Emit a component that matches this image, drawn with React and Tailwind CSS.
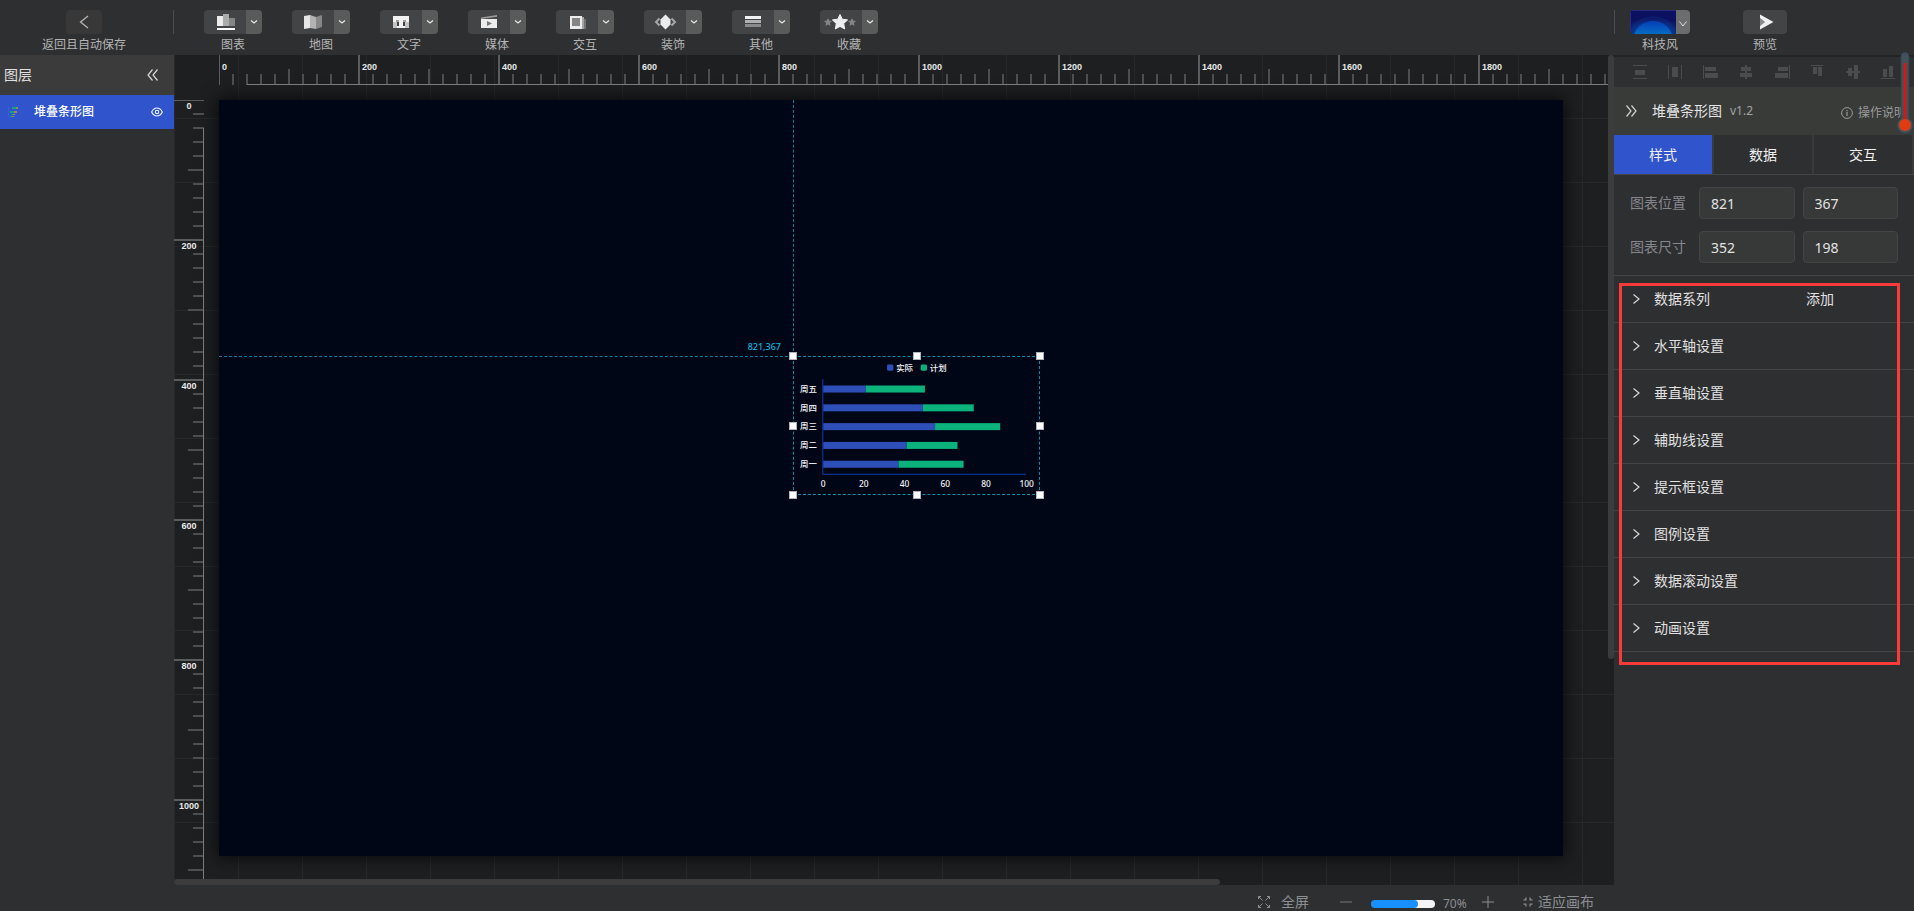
import React, { useState } from "react";

const SCALE = 0.7;

const TOOLS = [
  {
    label: "图表",
    icon: (
      <>
        <path d="M13 6h6v10h-6z" fill="#ececec" />
        <path d="M19 4h6v12h-6z" fill="#ababab" />
        <path d="M25 8h6v8h-6z" fill="#858585" />
        <path d="M13 18h18v2H13z" fill="#fff" />
      </>
    ),
  },
  {
    label: "地图",
    icon: (
      <>
        <path d="M12 6l6-1v13l-6 1z" fill="#e6e6e6" />
        <path d="M18 5l6 2v12l-6-1z" fill="#b2b2b2" />
        <path d="M24 7l6-2v12l-6 2z" fill="#878787" />
      </>
    ),
  },
  {
    label: "文字",
    icon: (
      <>
        <path d="M13 6h16v6H13z" fill="#f2f2f2" />
        <path d="M13 12h4v6h-4zM25 12h4v6h-4z" fill="#c4c4c4" />
        <path d="M16 10h3v2h-3zM23 10h3v2h-3z" fill="#a0a0a0" />
        <path d="M19 11h4v5h2v2h-8v-2h2z" fill="#f2f2f2" />
      </>
    ),
  },
  {
    label: "媒体",
    icon: (
      <>
        <path d="M13 9h16v9H13z" fill="#ececec" />
        <path d="M13 7.500L29 5v1.800L13 9z" fill="#9a9a9a" />
        <path d="M19 11l5 2.500-5 2.500z" fill="#777" />
      </>
    ),
  },
  {
    label: "交互",
    icon: (
      <>
        <path d="M26 9h4v10h-4z" fill="#727374" />
        <path d="M24 7h4v12h-4z" fill="#a3a3a3" />
        <path d="M14 6h12v13H14z" fill="#ececec" />
        <path d="M16 8h8v8h-8z" fill="#858585" />
      </>
    ),
  },
  {
    label: "装饰",
    icon: (
      <>
        <path d="M15.500 8.500L12 12l3.500 3.500M27.500 8.500L31 12l-3.500 3.500" fill="none" stroke="#a6a6a6" strokeWidth="2" />
        <path d="M21.500 4.500L24 7l2.500 2.500v5L24 17l-2.500 2.500L19 17l-2.500-2.500v-5L19 7z" fill="#ececec" />
      </>
    ),
  },
  {
    label: "其他",
    icon: (
      <>
        <path d="M13 6h16v3H13z" fill="#f2f2f2" />
        <path d="M13 10h16v3H13z" fill="#b0b0b0" />
        <path d="M13 14h16v3H13z" fill="#8a8a8a" />
      </>
    ),
  },
  {
    label: "收藏",
    icon: (
      <>
        <path d="M8 8l1.200 2.600 2.800.3-2.100 2 .6 2.900L8 14.400l-2.500 1.400.6-2.900-2.100-2 2.800-.3z" fill="#858585" />
        <path d="M32 8l1.200 2.600 2.800.3-2.100 2 .6 2.900-2.500-1.400-2.500 1.400.6-2.900-2.100-2 2.800-.3z" fill="#858585" />
        <path d="M20 4.500l2.300 4.700 5.300.7-3.900 3.600 1 5.500-4.700-2.600L15.300 19l1-5.500-3.900-3.600 5.300-.7z" fill="#efefef" stroke="#efefef" strokeLinejoin="round" />
      </>
    ),
  },
];

const ALIGN = [
  ["水平分布", "M1 1h14v1H1zM3 6h10v5H3zM1 14h14v1H1z"],
  ["垂直分布", "M1 1h1v14H1zM5 3h6v10H5zM14 1h1v14h-1z"],
  ["左对齐", "M0 1h1v14H0zM2 3h11v4H2zM2 9h13v5H2z"],
  ["水平居中", "M7 1h2v14H7zM3 3h10v4H3zM2 9h12v4H2z"],
  ["右对齐", "M15 1h1v14h-1zM4 3h10v4H4zM1 9h13v5H1z"],
  ["顶对齐", "M2 1h12v1H2zM4 3h4v7H4zM9 3h4v9H9z"],
  ["垂直居中", "M1 7h14v2H1zM3 4h4v8H3zM9 1h4v14H9z"],
  ["底对齐", "M1 14h14v1H1zM3 5h4v8H3zM9 2h4v11H9z"],
];

const SECTIONS = ["数据系列", "水平轴设置", "垂直轴设置", "辅助线设置", "提示框设置", "图例设置", "数据滚动设置", "动画设置"];

const ROWS = [
  ["周五", 21, 50],
  ["周四", 49, 74],
  ["周三", 55, 87],
  ["周二", 41, 66],
  ["周一", 37, 69],
];

function Chevron({ className }) {
  return (
    <svg viewBox="0 0 8 4" className={className} aria-hidden="true">
      <path d="M1 .5l3 2.500L7 .5" fill="none" stroke="#e4e4e4" strokeWidth="1.300" />
    </svg>
  );
}

function Tool({ label, icon }) {
  return (
    <div className="flex flex-col items-center">
      <div className="flex h-6 overflow-hidden rounded-sm">
        <button type="button" aria-label={label} className="w-[42px] bg-[#434446]">
          <svg viewBox="0 0 42 24" className="block h-6 w-[42px]" aria-hidden="true">{icon}</svg>
        </button>
        <button type="button" aria-label={`${label}菜单`} className="flex w-4 items-center justify-center bg-[#595b5a]">
          <Chevron className="h-1 w-2" />
        </button>
      </div>
      <span className="mt-0.5 text-xs leading-[18px] text-[#b4b4b4]">{label}</span>
    </div>
  );
}

function Header() {
  return (
    <header className="flex h-[55px] shrink-0 bg-[#2e2f31] pt-2.5">
      <div className="flex w-[174px] shrink-0 justify-between">
        <div className="flex w-[168px] flex-col items-center">
          <button type="button" aria-label="返回" className="flex h-6 w-9 items-center justify-center rounded-sm bg-[#373837]">
            <svg viewBox="0 0 10 14" className="h-3.5 w-2.5" aria-hidden="true">
              <path d="M9 1L1.500 7 9 13" fill="none" stroke="#b5b5b5" strokeWidth="1.300" />
            </svg>
          </button>
          <span className="mt-0.5 text-xs leading-[18px] text-[#b4b4b4]">返回且自动保存</span>
        </div>
        <div className="h-6 w-px bg-[#4a4b4c]" />
      </div>
      <nav className="flex gap-[30px] pl-[30px]">
        {TOOLS.map((t) => (
          <Tool key={t.label} {...t} />
        ))}
      </nav>
      <div className="ml-auto flex w-[300px] shrink-0">
        <div className="h-6 w-px bg-[#4a4b4c]" />
        <div className="ml-[15px] flex flex-col items-center">
          <div className="flex h-6 overflow-hidden rounded-sm">
            <button type="button" aria-label="科技风" className="w-[46px]">
              <svg viewBox="0 0 46 24" className="block h-6 w-[46px]" aria-hidden="true">
                <defs>
                  <radialGradient id="glow" cx="0.5" cy="1" r="0.700">
                    <stop offset="0" stopColor="#0a6fd0" />
                    <stop offset="1" stopColor="#0c1060" />
                  </radialGradient>
                  <linearGradient id="dome" x1="0" y1="0" x2="0" y2="0.500">
                    <stop offset="0" stopColor="#063db8" />
                    <stop offset="1" stopColor="#0585c8" />
                  </linearGradient>
                </defs>
                <path d="M0 0h46v24H0z" fill="url(#glow)" />
                <circle cx="23" cy="31" r="24" fill="none" stroke="#0d3a8c" strokeOpacity="0.500" />
                <circle cx="23" cy="31" r="20" fill="url(#dome)" />
                <path d="M.5 24V.5H46" fill="none" stroke="#2c2b7c" />
              </svg>
            </button>
            <button type="button" aria-label="主题菜单" className="flex w-3.5 items-center justify-center bg-[#6c6e6e] pt-1">
              <svg viewBox="0 0 8 6" className="h-1.5 w-2" aria-hidden="true">
                <path d="M.5.5L4 5 7.500.5" fill="none" stroke="#ddd" />
              </svg>
            </button>
          </div>
          <span className="mt-0.5 text-xs leading-[18px] text-[#b4b4b4]">科技风</span>
        </div>
        <div className="ml-[53px] flex flex-col items-center">
          <button type="button" aria-label="预览" className="h-6 w-11 rounded-sm bg-[#434446]">
            <svg viewBox="0 0 44 24" className="block h-6 w-11" aria-hidden="true">
              <path d="M17 8l5 4-5 4z" fill="#8a8a8a" />
              <path d="M17 4.500L30.500 12 17 19.500V16l5-4-5-4z" fill="#f0f0f0" />
            </svg>
          </button>
          <span className="mt-0.5 text-xs leading-[18px] text-[#b4b4b4]">预览</span>
        </div>
      </div>
    </header>
  );
}

function Layers() {
  return (
    <aside className="flex w-[174px] shrink-0 flex-col bg-[#2e2f31]">
      <div className="flex h-10 items-center justify-between bg-[#3a3b3a] pl-1 pr-4">
        <h2 className="text-sm text-[#e0e0e0]">图层</h2>
        <button type="button" aria-label="收起图层">
          <svg viewBox="0 0 11 12" className="h-3 w-[11px]" aria-hidden="true">
            <path d="M5.500.5L1 6l4.500 5.500M10.500.5L6 6l4.500 5.500" fill="none" stroke="#d8d8d8" strokeWidth="1.200" />
          </svg>
        </button>
      </div>
      <div className="flex h-[34px] items-center bg-[#2f54cb] pl-2 pr-[11px]">
        <svg viewBox="0 0 12 12" className="h-3 w-3" aria-hidden="true">
          <path d="M0 1v10" stroke="#4668cf" />
          <path d="M4 1h4v2H4zM2 5h4v2H2zM3 8h2v1H3zM2 10h2v1H2z" fill="#16a08a" />
          <path d="M8 1h2v2H8zM6 5h3v2H6zM5 8h2v1H5zM4 10h2v1H4z" fill="#a08a50" />
        </svg>
        <span className="ml-3.5 text-xs font-medium text-white">堆叠条形图</span>
        <button type="button" aria-label="显示图层" className="ml-auto">
          <svg viewBox="0 0 12 10" className="h-2.5 w-3" aria-hidden="true">
            <path d="M.6 5C2 2.300 3.800 1 6 1s4 1.300 5.400 4C10 7.700 8.200 9 6 9S2 7.700.6 5z" fill="none" stroke="#f2f4ff" strokeWidth="1.100" />
            <circle cx="6" cy="5" r="1.700" fill="none" stroke="#f2f4ff" strokeWidth="1.100" />
          </svg>
        </button>
      </div>
    </aside>
  );
}

function HorizontalRuler() {
  const ticks = Array.from({ length: 100 }, (_, i) => i);
  return (
    <svg className="absolute left-0 top-0 h-[30px] w-full" aria-hidden="true">
      {ticks.map((i) => {
        const x = 45 + i * 14;
        const top = i % 10 === 0 ? 0 : i % 5 === 0 ? 14 : 19;
        return <rect key={i} x={i === 0 ? x : x - 1} y={top} width={i === 0 ? 1 : 2} height={30 - top} fill={i % 10 === 0 ? "#5b5c5c" : "#4d4e4f"} />;
      })}
      <line x1="73" x2="100%" y1="29.500" y2="29.500" stroke="#7b7c7c" />
      {ticks.filter((i) => i % 10 === 0).map((i) => (
        <text key={i} x={48 + i * 14} y="15" fontSize="9" fontWeight="700" fill="#e8e8e8" fontFamily="Liberation Sans, sans-serif">
          {i * 20}
        </text>
      ))}
    </svg>
  );
}

function VerticalRuler() {
  const ticks = Array.from({ length: 60 }, (_, i) => i);
  return (
    <svg className="absolute left-0 top-0 h-[calc(100%-6px)] w-[30px]" aria-hidden="true">
      {ticks.map((i) => {
        const y = 45 + i * 14;
        const left = i % 10 === 0 ? 0 : i % 5 === 0 ? 14 : 19;
        return <rect key={i} x={left} y={i === 0 ? y : y - 1} width={30 - left} height={i === 0 ? 1 : 2} fill={i % 10 === 0 ? "#5b5c5c" : "#4d4e4f"} />;
      })}
      <line x1="29.500" x2="29.500" y1="73" y2="100%" stroke="#7b7c7c" />
      {ticks.filter((i) => i % 10 === 0).map((i) => (
        <text key={i} x="15" y={54 + i * 14} textAnchor="middle" fontSize="9" fontWeight="700" fill="#e8e8e8" fontFamily="Liberation Sans, sans-serif">
          {i * 20}
        </text>
      ))}
    </svg>
  );
}

function BarChart() {
  const x0 = 43;
  const unit = 2.9;
  return (
    <svg viewBox="0 0 352 198" className="block h-full w-full" fontFamily="Noto Sans, Noto Sans CJK SC, sans-serif" fontSize="12" fontWeight="500" fill="#f4f4f6">
      <rect x="134" y="12" width="9" height="9" rx="2" fill="#2f4fb8" />
      <text x="147" y="21">实际</text>
      <rect x="182" y="12" width="9" height="9" rx="2" fill="#0bb27c" />
      <text x="195" y="21">计划</text>
      {ROWS.map(([name, a, b], i) => {
        const y = 42 + i * 26.8;
        return (
          <g key={name}>
            <text x="34" y={y + 9} textAnchor="end">{name}</text>
            <rect x={x0} y={y} width={a * unit} height="10" fill="#2f4fb8" />
            <rect x={x0 + a * unit} y={y} width={(b - a) * unit} height="10" fill="#0bb27c" />
          </g>
        );
      })}
      <path d="M42.500 33v135.500H332" fill="none" stroke="#0a3fb0" strokeWidth="1.400" />
      {[0, 20, 40, 60, 80, 100].map((v) => (
        <text key={v} x={x0 + v * unit} y="186" textAnchor="middle">{v}</text>
      ))}
    </svg>
  );
}

const HANDLES = [
  "left-0 top-0", "left-1/2 top-0", "left-full top-0",
  "left-0 top-1/2", "left-full top-1/2",
  "left-0 top-full", "left-1/2 top-full", "left-full top-full",
];

function Workspace({ box }) {
  const left = Math.floor(box.x * SCALE);
  const top = Math.floor(box.y * SCALE);
  return (
    <main className="relative min-w-0 flex-1 overflow-hidden bg-[#1e1f20] bg-[linear-gradient(to_right,#29292a_1px,transparent_1px),linear-gradient(to_bottom,#29292a_1px,transparent_1px)] bg-[size:64px_64px] bg-[position:0_-1px] pl-[45px] pt-[45px]">
      <div className="relative h-[756px] w-[1344px] bg-[#010616] shadow-[0_0_16px_2px_rgba(0,0,0,0.7)]">
        <div className="absolute top-0 border-l border-dashed border-[#0a7f9c]" style={{ left, height: top }} />
        <div className="absolute left-0 border-t border-dashed border-[#0a7f9c]" style={{ top, width: left }} />
        <span className="absolute -translate-x-full whitespace-nowrap pr-3 font-['Noto_Sans'] text-[9px] font-medium leading-3 text-[#0fb4dc]" style={{ left, top: top - 15 }}>
          {box.x},{box.y}
        </span>
        <div className="absolute" style={{ left, top, width: Math.ceil(box.w * SCALE), height: Math.ceil(box.h * SCALE) }}>
          <BarChart />
          <div className="absolute inset-0 border border-dashed border-[#0a8fa8]" />
          {HANDLES.map((h) => (
            <span key={h} className={`absolute size-2 -translate-x-1/2 -translate-y-1/2 border border-[#b0b4bc] bg-white ${h}`} />
          ))}
        </div>
      </div>
      <HorizontalRuler />
      <VerticalRuler />
      <div className="absolute bottom-0 left-0 h-1.5 w-[1046px] rounded-full bg-[#3c3c3c]" />
      <div className="absolute right-0 top-0 h-[604px] w-1.5 rounded-full bg-[#3c3c3c]" />
    </main>
  );
}

function NumberPair({ label, names, values, onChange }) {
  return (
    <div className="flex items-center">
      <span className="w-[69px] shrink-0 text-sm text-[#85858c]">{label}</span>
      <div className="flex min-w-0 flex-1 gap-2">
        {values.map((v, i) => (
          <input
            key={names[i]}
            aria-label={`${label} ${names[i]}`}
            value={v}
            onChange={(e) => onChange(i, e.target.value)}
            className="h-8 w-0 min-w-0 flex-1 rounded border border-[#434545] bg-[#373938] px-[11px] text-sm text-[#e2e2e2] outline-none"
          />
        ))}
      </div>
    </div>
  );
}

function Thermometer() {
  return (
    <svg viewBox="0 0 18 86" className="pointer-events-none absolute right-0 -top-1 z-10 h-[86px] w-[18px]" aria-hidden="true">
      <path d="M5 5.500a4 4 0 0 1 8 0V67.500a8 8 0 1 1-8 0z" fill="#41525d" stroke="#35434b" />
      <path d="M9 12v62" stroke="#d01a16" strokeWidth="3" />
      <circle cx="9" cy="74" r="6" fill="#e03c12" />
    </svg>
  );
}

function Inspector({ box, setBox }) {
  const [tab, setTab] = useState("样式");
  const set = (keys) => (i, v) => setBox({ ...box, [keys[i]]: Number(v) || 0 });
  return (
    <aside className="relative w-[300px] shrink-0 bg-[#2e2f31]">
      <Thermometer />
      <div className="flex h-8 items-center justify-between overflow-hidden border-t-2 border-[#232425] pl-[18px] pr-[18px]">
        {ALIGN.map(([name, d]) => (
          <button key={name} type="button" aria-label={name}>
            <svg viewBox="0 0 16 16" className="block size-4" aria-hidden="true"><path d={d} fill="#4b4c4d" /></svg>
          </button>
        ))}
      </div>
      <div className="flex h-12 items-center overflow-hidden bg-[#393b39] pl-3">
        <button type="button" aria-label="收起面板">
          <svg viewBox="0 0 11 12" className="h-3 w-[11px]" aria-hidden="true">
            <path d="M.5.5L5 6 .5 11.500M5.500.5L10 6l-4.500 5.500" fill="none" stroke="#d0d0d0" strokeWidth="1.200" />
          </svg>
        </button>
        <h2 className="ml-[15px] text-sm text-[#e4e4e4]">堆叠条形图</h2>
        <span className="ml-2 text-xs text-[#a2a3a3]">v1.2</span>
        <a href="#help" className="ml-auto flex items-center gap-[5px] whitespace-nowrap pr-2 pt-1 text-xs text-[#999a9a]">
          <svg viewBox="0 0 12 12" className="size-3" aria-hidden="true">
            <circle cx="6" cy="6" r="5.400" fill="none" stroke="#999a9a" />
            <path d="M6 5v4M6 3v1.200" stroke="#999a9a" strokeWidth="1.200" />
          </svg>
          操作说明
        </a>
      </div>
      <div role="tablist" className="flex h-10 gap-0.5 border-b border-[#434446] bg-[#393a3b] pr-0.5">
        {["样式", "数据", "交互"].map((t) => (
          <button
            key={t}
            type="button"
            role="tab"
            aria-selected={tab === t}
            onClick={() => setTab(t)}
            className={`flex-1 text-sm text-[#f0f0f0] ${tab === t ? "bg-[#2f54cb]" : "bg-[#2e2f31]"}`}
          >
            {t}
          </button>
        ))}
      </div>
      <div className="flex flex-col gap-3 border-b border-[#434446] px-4 py-3">
        <NumberPair label="图表位置" names={["X", "Y"]} values={[box.x, box.y]} onChange={set(["x", "y"])} />
        <NumberPair label="图表尺寸" names={["宽", "高"]} values={[box.w, box.h]} onChange={set(["w", "h"])} />
      </div>
      <div className="relative">
        {SECTIONS.map((s, i) => (
          <div key={s} className="flex h-[47px] items-center border-b border-[#434446] pb-px pl-[19px] text-sm text-[#e0e0e0]">
            <button type="button" aria-expanded="false" className="flex items-center gap-3.5">
              <svg viewBox="0 0 7 10" className="h-2.5 w-[7px]" aria-hidden="true">
                <path d="M.5.5l5.500 4.500L.5 9.500" fill="none" stroke="#d8d8d8" strokeWidth="1.200" />
              </svg>
              {s}
            </button>
            {i === 0 && <button type="button" className="ml-auto mr-20">添加</button>}
          </div>
        ))}
        <div className="pointer-events-none absolute -bottom-[13px] left-[5px] right-[14px] top-[7px] border-[3px] border-[#fb3a3a]" />
      </div>
    </aside>
  );
}

function Footer() {
  const [zoom, setZoom] = useState(70);
  return (
    <footer className="flex h-[26px] shrink-0 items-center justify-end bg-[#2e2f31] pr-5 pt-2 text-sm leading-[18px] text-[#8d8e92]">
      <button type="button" className="flex items-center gap-[11px]">
        <svg viewBox="0 0 12 12" className="size-3" fill="none" stroke="currentColor" aria-hidden="true">
          <path d="M.5 3V.5H3M.5.5l4 4M9 .5h2.500V3M11.500.5l-4 4M.5 9v2.500H3M.5 11.500l4-4M9 11.500h2.500V9M11.500 11.500l-4-4" />
        </svg>
        全屏
      </button>
      <button type="button" aria-label="缩小" className="ml-[31px]">
        <svg viewBox="0 0 12 12" className="block size-3" aria-hidden="true"><path d="M0 6h12" stroke="#77787b" /></svg>
      </button>
      <input
        type="range"
        aria-label="缩放"
        min="0"
        max="100"
        value={zoom}
        onChange={(e) => setZoom(Number(e.target.value))}
        className="ml-[19px] mt-1 h-2 w-16 appearance-none rounded-full [&::-webkit-slider-thumb]:size-2 [&::-webkit-slider-thumb]:appearance-none [&::-webkit-slider-thumb]:rounded-full [&::-webkit-slider-thumb]:bg-[#1890ff]"
        style={{ background: `linear-gradient(to right, #1890ff ${zoom - 3}%, #f5f5f5 ${zoom - 3}%)` }}
      />
      <span className="ml-2 mt-1 w-[23px] text-xs leading-4">{zoom}%</span>
      <button type="button" aria-label="放大" className="ml-4">
        <svg viewBox="0 0 12 12" className="block size-3" aria-hidden="true"><path d="M0 6h12M6 0v12" stroke="#8d8e92" /></svg>
      </button>
      <button type="button" className="ml-[29px] flex items-center gap-[5px]">
        <svg viewBox="0 0 10 10" className="size-2.5" fill="none" stroke="currentColor" strokeWidth="1.200" aria-hidden="true">
          <path d="M.5 2.900h2.400V.5M7.100.5v2.400h2.400M.5 7.100h2.400v2.400M7.100 9.500V7.100h2.400" />
        </svg>
        适应画布
      </button>
    </footer>
  );
}

export default function App() {
  const [box, setBox] = useState({ x: 821, y: 367, w: 352, h: 198 });
  return (
    <div className="flex h-screen flex-col overflow-hidden bg-[#2e2f31] font-['Noto_Sans','Noto_Sans_CJK_SC',sans-serif]">
      <Header />
      <div className="flex min-h-0 flex-1">
        <Layers />
        <div className="flex min-h-0 min-w-0 flex-1 flex-col">
          <Workspace box={box} />
          <Footer />
        </div>
        <Inspector box={box} setBox={setBox} />
      </div>
    </div>
  );
}
